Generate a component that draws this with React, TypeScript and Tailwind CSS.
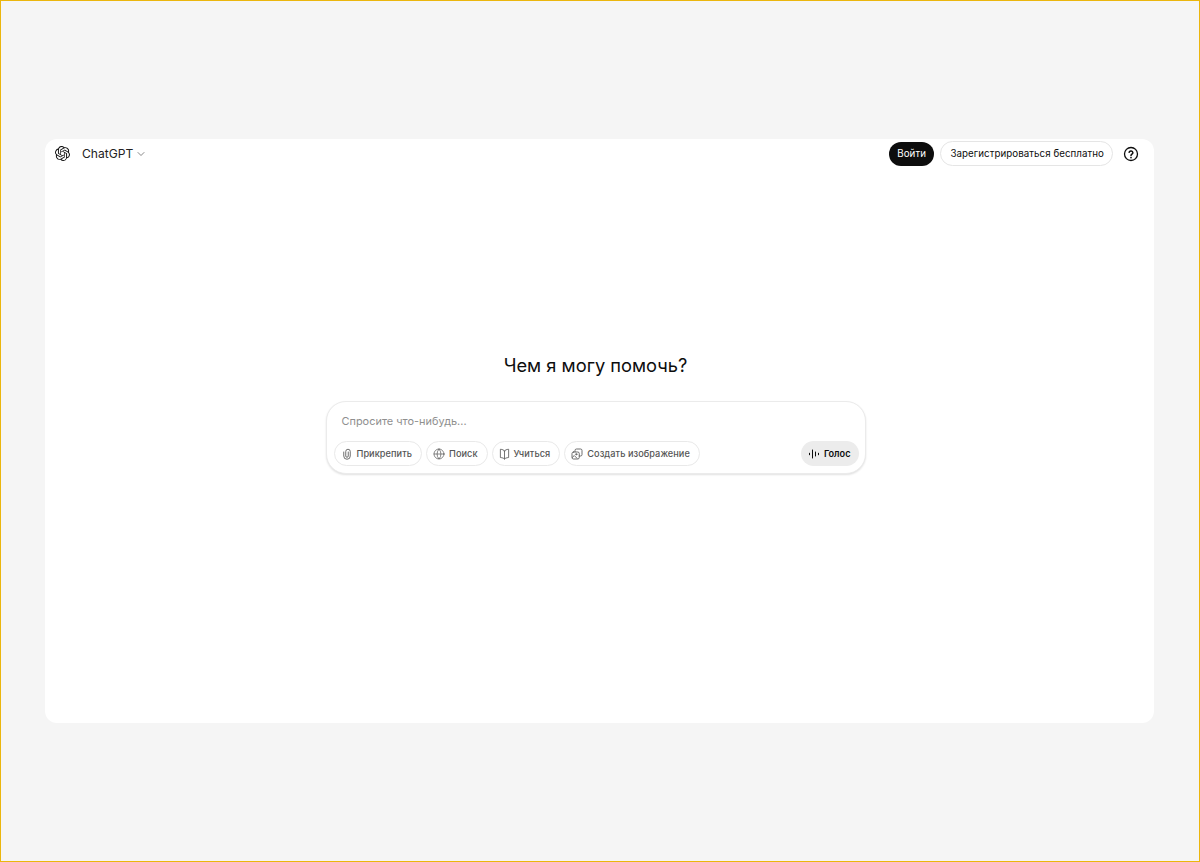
import { ChevronDown, Globe } from 'lucide-react';
import { SiOpenai } from 'react-icons/si';
import type { ReactNode } from 'react';

function Glyph({ children, strokeWidth = 1.7, narrow = false }: { children: ReactNode; strokeWidth?: number; narrow?: boolean }) {
  return (
    <svg
      viewBox="0 0 24 24"
      fill="none"
      stroke="currentColor"
      strokeWidth={strokeWidth}
      strokeLinecap="round"
      strokeLinejoin="round"
      className={narrow ? 'h-[12px] w-[11px] shrink-0' : 'h-[12px] w-[12px] shrink-0'}
      preserveAspectRatio="none"
    >
      {children}
    </svg>
  );
}

const ClipIcon = () => (
  <Glyph>
    <path d="M5.500 8v8a6.500 6.500 0 0 0 13 0V7a4.500 4.500 0 0 0-9 0v9a2.500 2.500 0 0 0 5 0V8" />
  </Glyph>
);

const BookIcon = () => (
  <Glyph narrow>
    <path d="M12 6C10.500 4 8 3 3 2.500v16.500c5 .5 7.500 1.500 9 3 1.500-1.500 4-2.500 9-3V2.500C16 3 13.500 4 12 6z" />
    <path d="M12 6v16" />
  </Glyph>
);

const ImagesIcon = () => (
  <Glyph>
    <path d="M8 7.500V5a3 3 0 0 1 3-3h8a3 3 0 0 1 3 3v8a3 3 0 0 1-3 3h-2.500" />
    <rect x="2" y="8" width="14.500" height="14" rx="3" />
    <circle cx="10.500" cy="12.500" r="1.300" />
    <path d="M2.500 19l4-4 5.500 5.500" />
  </Glyph>
);

const VoiceIcon = () => (
  <Glyph strokeWidth={2}>
    <path d="M3 10.500v3M9 4v16M15 8v8M21 10.500v3" />
  </Glyph>
);

const HelpIcon = () => (
  <svg viewBox="0 0 16 16" fill="none" stroke="currentColor" strokeWidth={1.3} strokeLinecap="round" strokeLinejoin="round" className="ml-[10px] h-[16px] w-[16px] text-[#0d0d0d]">
    <circle cx="8" cy="8" r="6.500" />
    <path d="M6.100 6.300a1.950 1.950 0 0 1 3.800.4c0 1.300-1.900 1.600-1.900 2.700" strokeWidth={1.5} />
    <path d="M8 11.500v.1" strokeWidth={1.7} />
  </svg>
);

function Chip({ icon, label }: { icon: ReactNode; label: string }) {
  return (
    <button className="flex h-[25px] items-center gap-[4px] rounded-full border border-[#e9e9e9] bg-white pl-[6px] pr-[9px] text-[9.2px] font-medium tracking-[0.05px] text-[#555]">
      {icon}
      <span>{label}</span>
    </button>
  );
}

export default function App() {
  return (
    <div className="h-[862px] border border-[#ebb60d] bg-[#f5f5f5] pl-[44px] pr-[45px] pt-[138px] font-['Inter',sans-serif]">
      <main className="flex h-[584px] flex-col rounded-xl bg-white">
        {/* top bar */}
        <header className="flex h-[29px] items-center justify-between pl-[10px] pr-[15px]">
          <div className="flex items-center">
            <SiOpenai className="h-[15px] w-[15px] text-[#111]" />
            <span className="ml-[12px] pt-[1px] text-[12.1px] leading-[16px] text-[#222]">ChatGPT</span>
            <ChevronDown className="ml-[2px] h-[12px] w-[12px] text-[#555]" strokeWidth={1.4} />
          </div>
          <div className="flex items-center">
            <button className="h-[24px] rounded-full bg-[#0d0d0d] px-[8.5px] pt-[1px] text-[9.75px] font-normal leading-[16px] tracking-[0.05px] text-white">Войти</button>
            <button className="ml-[6px] h-[25px] rounded-full border border-[#e5e5e5] bg-white pl-[9px] pr-[8px] pt-[1px] text-[9.75px] font-normal leading-[16px] tracking-[0.05px] text-[#0d0d0d]">
              Зарегистрироваться бесплатно
            </button>
            <HelpIcon />
          </div>
        </header>

        {/* centre */}
        <section className="flex flex-col items-center pr-[8px] pt-[184px]">
          <h1 className="text-[18.3px] font-normal leading-[26px] text-[#0d0d0d]">Чем я могу помочь?</h1>
          <div className="mt-[23px] w-[540px] rounded-[20px] border border-[#ebebeb] bg-white pb-[7px] pl-[7px] pr-[6px] pt-[11px] shadow-[0_1px_2px_rgba(0,0,0,0.12)]">
            <div className="pl-[8px] text-[10.95px] leading-[16px] text-[#8f8f8f]">Спросите что-нибудь...</div>
            <div className="mt-[12px] flex items-center justify-between">
              <div className="flex items-center gap-[4px]">
                <Chip icon={<ClipIcon />} label="Прикрепить" />
                <Chip icon={<Globe className="h-[12px] w-[12px]" strokeWidth={1.4} />} label="Поиск" />
                <Chip icon={<BookIcon />} label="Учиться" />
                <Chip icon={<ImagesIcon />} label="Создать изображение" />
              </div>
              <button className="flex h-[25px] items-center gap-[4px] rounded-full bg-[#ececec] pl-[7px] pr-[8px] text-[9.2px] font-semibold text-[#0d0d0d]">
                <VoiceIcon />
                Голос
              </button>
            </div>
          </div>
        </section>
      </main>
    </div>
  );
}
